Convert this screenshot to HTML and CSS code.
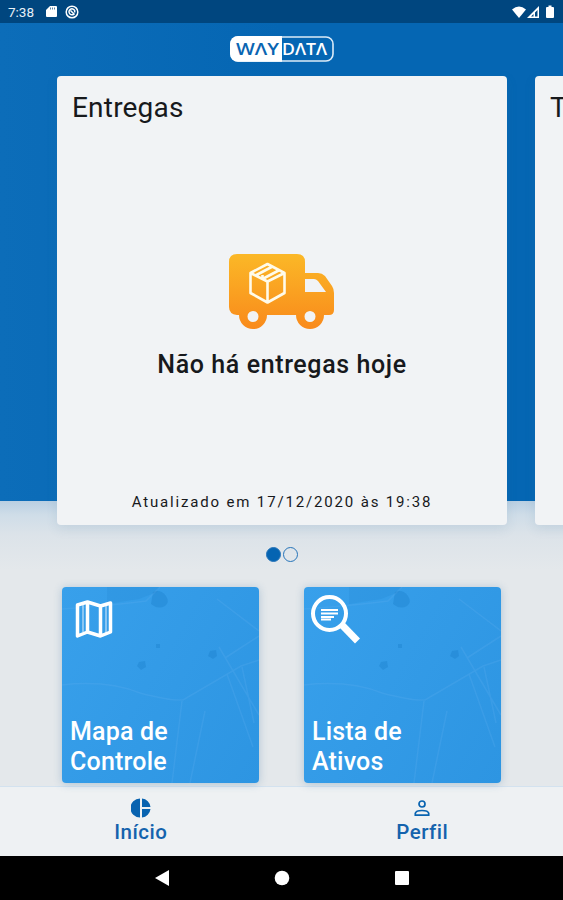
FILE: index.html
```html
<!DOCTYPE html>
<html lang="pt-BR">
<head>
    <meta charset="UTF-8">
    <meta name="viewport" content="width=device-width, initial-scale=1.0">
    <title>Waydata</title>
    <link rel="stylesheet" href="styles.css">
</head>
<body>
    <div class="status-bar">
        <span class="clock">7:38</span>
        <svg class="sd" width="11" height="13" viewBox="0 0 11 13"><path fill="#fff" d="M4 1h6a1 1 0 0 1 1 1v9a1 1 0 0 1-1 1H1a1 1 0 0 1-1-1V5z"/><path stroke="#5b84a8" d="M4.5 2.5v2M6.5 2.5v2M8.5 2.5v2"/></svg>
        <svg width="14" height="14" viewBox="0 0 14 14" fill="none" stroke="#fff" stroke-width="1.5"><circle cx="7" cy="7" r="5.8"/><path d="M9.5 8.5A3 3 0 1 1 9.7 5.5V7.500M5.500 5.500l4 4"/></svg>
        <svg class="signals" width="44" height="14" viewBox="0 0 44 14">
            <path fill="#fff" d="M0 4.500Q7 -1.500 14 4.500L7 13z"/>
            <path fill="#fff" d="M27 1v12H15z"/>
            <path fill="#00467f" d="M25.500 5v6.500h-2.500V7.500zM21.500 9v2.500H19z"/>
            <path fill="#fff" d="M35 2h1.500V.5h3V2H41q1 0 1 1v9q0 1-1 1h-6q-1 0-1-1V3q0-1 1-1z"/>
        </svg>
    </div>

    <header>
        <svg width="104" height="26" viewBox="0 0 104 26">
            <rect x="1" y="1" width="102" height="24" rx="7" fill="none" stroke="#dcebf8" stroke-width="1.600"/>
            <path fill="#fff" d="M8 0h44v25.800H8a8 8 0 0 1-8-8V8a8 8 0 0 1 8-8z"/>
            <text class="logo-way" x="6" y="18.500" textLength="43" lengthAdjust="spacingAndGlyphs">WΛY</text>
            <text class="logo-data" x="52" y="18.500" textLength="45" lengthAdjust="spacingAndGlyphs">DΛTΛ</text>
        </svg>
    </header>

    <main>
        <div class="carousel">
            <section class="card">
                <h1>Entregas</h1>
                <div class="empty">
                    <svg width="106" height="78" viewBox="0 0 106 78">
                        <defs>
                            <linearGradient id="orange" x1="0" y1="0" x2="0" y2="1">
                                <stop offset="0" stop-color="#fbb827"/>
                                <stop offset="1" stop-color="#f98a1b"/>
                            </linearGradient>
                        </defs>
                        <path fill="url(#orange)" fill-rule="evenodd" d="M8 1h60q8 0 8 8v11h13q4 0 7 3l7 10q2 3 2 7v17q0 5-5 5h-5a14 14 0 0 1-28 0H38a14 14 0 0 1-28 0H8q-8-1-8-8V9q0-8 8-8zM76 26v13h21l-8-11q-2-2-4-2zM24 58a5.500 5.500 0 1 0 0 11 5.500 5.500 0 0 0 0-11zM81 58a5.500 5.500 0 1 0 0 11 5.500 5.500 0 0 0 0-11z"/>
                        <path fill="none" stroke="#fffbea" stroke-width="2.600" stroke-linejoin="round" d="M38.500 11l17 9v20l-17 9.500-17-9.500V20zM21.500 20l17 8.500 17-8.500M38.500 28.500v21M26.500 22.500l17-9M33.500 26l17-9M33.500 26v-4"/>
                    </svg>
                    <p>Não há entregas hoje</p>
                </div>
                <p class="updated">Atualizado em 17/12/2020 às 19:38</p>
            </section>
            <section class="card">
                <h1>T</h1>
            </section>
        </div>

        <div class="dots">
            <span class="dot active"></span>
            <span class="dot"></span>
        </div>

        <!-- street map drawn behind both tiles -->
        <svg width="0" height="0" class="defs">
            <symbol id="streets" viewBox="0 0 197 196">
                <path fill="#1c83cf" opacity=".2" d="M45 0h52l-2 5-18 7-32 5z"/>
                <path fill="#1478c4" opacity=".3" d="M91 5q8-3 13 4 4 6-1 10-7 4-14-2zM77 75l6-1 1 6-5 3-4-4zM148 64l6-1 1 6-4 3-5-3zM94 57h4v4h-4z"/>
                <g fill="none" stroke="#62b3f0" stroke-width="1.500" opacity=".22">
                    <path d="M0 98q45-5 78 8 30 8 43 7l58-34 18-6M0 22q54-4 84-8L98 0M155 12l42 32M157 60l40 68M165 87l26 73M180 80l12 56M120 114l-10 82M143 124l-15 72M197 49l-34 22"/>
                </g>
            </symbol>
        </svg>

        <div class="tiles">
            <a class="tile">
                <svg class="streets"><use href="#streets"/></svg>
                <svg class="icon" width="38" height="38" viewBox="0 0 38 38" fill="none" stroke="#fff" stroke-width="3.500" stroke-linejoin="round"><path d="M2.500 5l10-3 13 4 10-3v29l-10 4-13-4-10 4zM12.500 2v30M25.500 6v30"/><path stroke-width="1.200" opacity=".7" d="M8 5v27M31 6v27"/></svg>
                <span>Mapa de<br>Controle</span>
            </a>
            <a class="tile">
                <svg class="streets"><use href="#streets"/></svg>
                <svg class="icon search" width="50" height="50" viewBox="0 0 50 50" fill="none" stroke="#fff"><circle cx="18.500" cy="18.500" r="16.500" stroke-width="4"/><path stroke-width="7" d="M31 30l15.500 16"/><path stroke-width="2" d="M10 15h17M10 18.500h17M10 22h13M10 24.500h10"/></svg>
                <span>Lista de<br>Ativos</span>
            </a>
        </div>
    </main>

    <nav>
        <a>
            <svg width="20" height="20" viewBox="0 0 20 20" fill="#0863b0"><path d="M9 .5v19a9.500 9.500 0 0 1 0-19zM11 .5A9.500 9.500 0 0 1 19.500 9H11zM11 11h8.500a9.500 9.500 0 0 1-8.500 8.500z"/></svg>
            Início
        </a>
        <a>
            <svg width="20" height="20" viewBox="0 0 20 20" fill="none" stroke="#0863b0" stroke-width="1.700"><circle cx="10" cy="6" r="3"/><path d="M3.300 17.200v-2Q4 12.500 10 12.500t6.700 2.700v2z"/></svg>
            Perfil
        </a>
    </nav>

    <div class="system-bar">
        <svg width="16" height="16" viewBox="0 0 16 16"><path d="M15 0v16L1 8z"/></svg>
        <svg width="16" height="16" viewBox="0 0 16 16"><circle cx="8" cy="8" r="7.300"/></svg>
        <svg width="16" height="16" viewBox="0 0 16 16"><rect x="1" y="1" width="14" height="14" rx="1"/></svg>
    </div>
</body>
</html>
```
FILE: styles.css
```css
body {
    font-family: Roboto, sans-serif;
    margin: 0;
    height: 900px;
    display: flex;
    flex-direction: column;
    overflow: hidden;
    background: linear-gradient(to bottom, transparent 501px, #b9cfe2 501px, #cfdde8 515px, #dce3e9 535px, #e4e8eb 570px), linear-gradient(to right, #0c6db9, #0566b3 50%);
}
h1, p {
    margin: 0;
}
.status-bar {
    height: 23px;
    box-sizing: border-box;
    padding: 0 7px 0 8px;
    display: flex;
    align-items: center;
    background-color: #00467f;
    color: #e8f1f8;
    font-size: 13.5px;
}
.clock {
    width: 38px;
}
.sd {
    margin-right: 8px;
}
.signals {
    margin-left: auto;
}
header {
    height: 52px;
    display: flex;
    justify-content: center;
    align-items: center;
    padding-bottom: 1px;
}
.logo-way, .logo-data {
    font-family: "Open Sans", sans-serif;
    font-size: 16px;
    font-weight: 600;
    fill: #0a65b2;
}
.logo-data {
    fill: #fff;
}
.carousel {
    display: flex;
    gap: 28px;
    padding-left: 57px;
    overflow-x: clip;
}
.card {
    flex: 0 0 450px;
    height: 449px;
    box-sizing: border-box;
    padding: 15px 15px 14px;
    display: flex;
    flex-direction: column;
    border-radius: 4px;
    background-color: #f1f3f5;
    box-shadow: 0 4px 12px rgba(60, 110, 150, 0.12);
    color: #17191c;
}
.card h1 {
    font-size: 28px;
    font-weight: 400;
    line-height: 33px;
    letter-spacing: 0.2px;
}
.empty {
    flex: 1;
    display: flex;
    flex-direction: column;
    align-items: center;
    padding-top: 129px;
}
.empty p {
    margin-top: 19px;
    font-size: 25px;
    font-weight: 500;
    line-height: 30px;
    letter-spacing: 0.6px;
}
.updated {
    text-align: center;
    font-size: 15px;
    line-height: 18px;
    letter-spacing: 1.84px;
}
.dots {
    display: flex;
    justify-content: center;
    gap: 2px;
    padding: 22px 0 25px;
}
.dot {
    width: 15px;
    height: 15px;
    box-sizing: border-box;
    border: 1.5px solid #2674b9;
    border-radius: 50%;
}
.dot.active {
    background-color: #0564b2;
}
.defs {
    display: block;
}
.tiles {
    display: flex;
    justify-content: center;
    gap: 45px;
    height: 198px;
}
.tile {
    position: relative;
    width: 197px;
    height: 196px;
    box-sizing: border-box;
    padding: 13px 8px 6px;
    display: flex;
    flex-direction: column;
    justify-content: space-between;
    border-radius: 4px;
    overflow: hidden;
    background: linear-gradient(120deg, #38a0eb, #2d95e2);
    box-shadow: 0 1px 8px rgba(50, 110, 160, 0.3);
    color: #fff;
    font-size: 25px;
    font-weight: 500;
    line-height: 30px;
    letter-spacing: 0.2px;
}
.streets {
    position: absolute;
    top: 0;
    left: 0;
    width: 197px;
    height: 196px;
}
.icon {
    margin-left: 5px;
    position: relative;
}
.icon.search {
    margin: -5px 0 0 -1px;
}
.tile span {
    position: relative;
}
nav {
    height: 70px;
    margin-top: auto;
    display: flex;
    background-color: #eef1f3;
    border-top: 1px solid #d3e2ef;
    box-sizing: border-box;
}
nav a {
    flex: 1;
    display: flex;
    flex-direction: column;
    align-items: center;
    padding-top: 11px;
    color: #1463ad;
    font-size: 20.5px;
    font-weight: 500;
    line-height: 28px;
    letter-spacing: 0.5px;
}
.system-bar {
    height: 44px;
    display: flex;
    justify-content: center;
    align-items: center;
    gap: 104px;
    background-color: #000;
    fill: #fff;
}
```
